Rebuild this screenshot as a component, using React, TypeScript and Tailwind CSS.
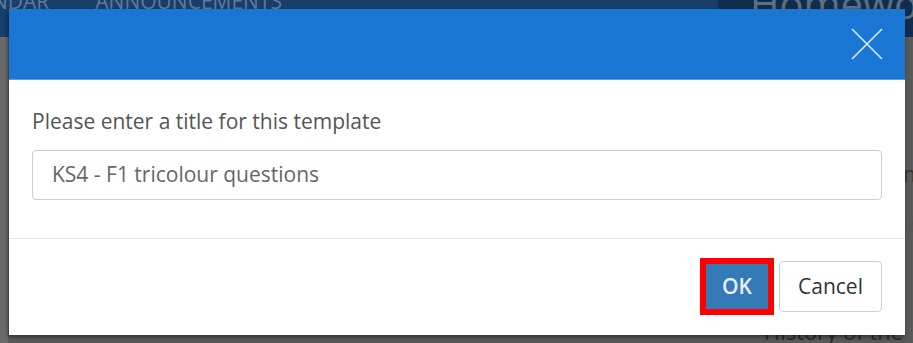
export default function App() {
  return (
    <div className="relative w-[913px] h-[343px] overflow-hidden bg-[#595959] font-['Open_Sans',sans-serif]">
      {/* Page behind the modal (dimmed) */}
      <div className="flex h-[37px] bg-[#173f69]">
        <div className="flex flex-1 items-start gap-[46px] text-[21px] leading-none text-[#5d7b9c]">
          <span className="-ml-[8px] -mt-[9px]">NDAR</span>
          <span className="-mt-[9px]">ANNOUNCEMENTS</span>
        </div>
        <div className="w-[195px] bg-[#0f2e4f] pl-[32px] text-[40px] leading-none text-[#5f6e80] -mt-[16px]">
          Homework
        </div>
      </div>
      <div className="flex h-[306px]">
        <div className="w-[8px] bg-[#6a6a6a]" />
        <div className="flex-1" />
        <div className="w-[10px] pt-[112px] text-[21px] leading-[50px] text-[#333]">
          <div>ni</div>
          <div className="text-[#555]">e</div>
        </div>
      </div>
      <div className="absolute left-[764px] top-[320px] text-[22px] text-[#2a2a2a] leading-none">
        History of the T
      </div>

      {/* Modal */}
      <div className="absolute left-[9px] top-[9px] w-[896px] h-[326px] bg-white flex flex-col shadow-[-1px_2px_4px_rgba(0,0,0,0.45)]">
        <div className="h-[71px] bg-[#1976d2] border-b border-[#5a9be0] flex items-center justify-end pr-[22px]">
          <svg width="32" height="32" viewBox="0 0 32 32" className="text-[#dbe9f7]">
            <path d="M1 1L31 31M31 1L1 31" stroke="currentColor" strokeWidth="1.6" fill="none" />
          </svg>
        </div>
        <div className="px-[23px] pt-[27px] pb-[38px] border-b border-[#e5e5e5]">
          <label className="block text-[21px] leading-[28px] text-[#555]">
            Please enter a title for this template
          </label>
          <div className="mt-[15px] h-[50px] rounded-[4px] border border-[#ccc] flex items-center px-[19px] text-[21px] text-[#666]">
            KS4 - F1 tricolour questions
          </div>
        </div>
        <div className="flex flex-1 justify-end items-center gap-[5px] pr-[23px] pb-[1px]">
          <div className="border-[6px] border-[#f00] bg-[#337ab7] w-[74px] h-[57px] flex items-center justify-center text-[21px] font-semibold text-[#e9eef4]">
            OK
          </div>
          <div className="w-[103px] h-[51px] rounded-[4px] border border-[#ccc] flex items-center justify-center text-[21px] text-[#333]">
            Cancel
          </div>
        </div>
      </div>
    </div>
  )
}
